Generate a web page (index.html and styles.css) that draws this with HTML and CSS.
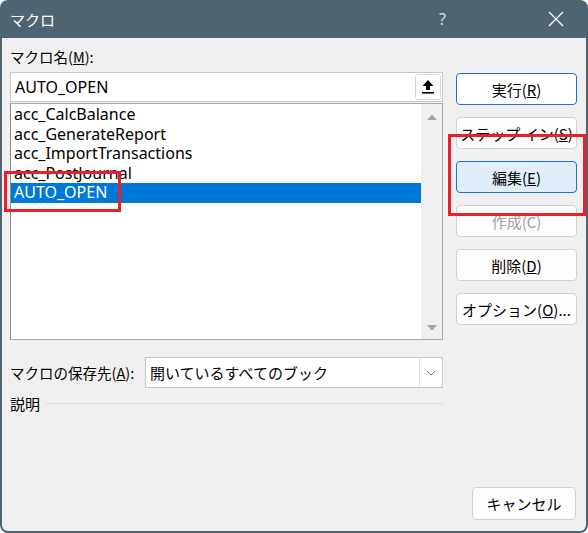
FILE: index.html
```html
<!DOCTYPE html>
<html lang="ja">
<head>
<meta charset="utf-8">
<title>マクロ</title>
<link rel="stylesheet" href="styles.css">
</head>
<body>
<div class="window">
  <div class="titlebar">
    <span class="title">マクロ</span>
    <span class="help">?</span>
    <svg class="close" width="16" height="16" viewBox="0 0 16 16"><path d="M1 1 L15 15 M15 1 L1 15" stroke="#ffffff" stroke-width="1.3" fill="none"/></svg>
  </div>
  <div class="content">
    <div class="main">
      <div class="left">
        <div class="label">マクロ名(<u>M</u>):</div>
        <div class="namebox">
          <span class="nametext">AUTO_OPEN</span>
          <div class="upbtn">
            <svg width="14" height="16" viewBox="0 0 14 16"><path d="M7 1 L12.5 7 L9 7 L9 11 L5 11 L5 7 L1.5 7 Z" fill="#000"/><rect x="1" y="13" width="12" height="1.6" fill="#000"/></svg>
          </div>
        </div>
        <div class="listbox">
          <div class="items">
            <div class="item">acc_CalcBalance</div>
            <div class="item">acc_GenerateReport</div>
            <div class="item">acc_ImportTransactions</div>
            <div class="item">acc_PostJournal</div>
            <div class="item selected">AUTO_OPEN</div>
          </div>
          <div class="scrollbar">
            <svg width="12" height="8" viewBox="0 0 12 8"><path d="M1 7 L6 1.5 L11 7 Z" fill="#a3a3a3"/></svg>
            <svg width="12" height="8" viewBox="0 0 12 8"><path d="M1 1 L6 6.5 L11 1 Z" fill="#a3a3a3"/></svg>
          </div>
        </div>
        <div class="saverow">
          <span class="savelabel">マクロの保存先(<u>A</u>):</span>
          <div class="select">
            <span class="selecttext">開いているすべてのブック</span>
            <div class="selectbtn">
              <svg width="10" height="6" viewBox="0 0 10 6"><path d="M1 1 L5 5 L9 1" stroke="#777" stroke-width="1" fill="none"/></svg>
            </div>
          </div>
        </div>
        <div class="descrow">
          <span>説明</span>
          <div class="rule"></div>
        </div>
      </div>
      <div class="buttons">
        <div class="btn default">実行(<u>R</u>)</div>
        <div class="btn">ステップ イン(<u>S</u>)</div>
        <div class="btn hover">編集(<u>E</u>)</div>
        <div class="btn disabled">作成(C)</div>
        <div class="btn">削除(<u>D</u>)</div>
        <div class="btn">オプション(<u>O</u>)...</div>
      </div>
    </div>
    <div class="footer">
      <div class="btn cancel">キャンセル</div>
    </div>
  </div>
  <div class="mark mark-list"></div>
  <div class="mark mark-edit"></div>
</div>
</body>
</html>
```

FILE: styles.css
```css
html, body {
  margin: 0;
  padding: 0;
  background: #ffffff;
}
body {
  font-family: "Noto Sans", "Noto Sans CJK JP", sans-serif;
  font-size: 15px;
  color: #000;
}
.window {
  position: relative;
  width: 588px;
  height: 533px;
  background: #4e6470;
  border-radius: 8px;
  display: flex;
  flex-direction: column;
  overflow: hidden;
}
.titlebar {
  height: 38px;
  flex: none;
  display: flex;
  align-items: center;
  color: #ffffff;
}
.title {
  margin-left: 10px;
  font-family: "Noto Sans CJK JP", sans-serif;
  font-size: 15px;
  flex: 1;
}
.help {
  font-size: 16px;
  color: #d8dee2;
  margin-right: 102px;
}
.close {
  margin-right: 24px;
}
.content {
  flex: 1;
  margin: 0 2px 2px 2px;
  background: #f0f0f0;
  border-radius: 0 0 6px 6px;
  display: flex;
  flex-direction: column;
  padding: 9px 0 11px 8px;
}
.main {
  display: grid;
  grid-template-columns: 433px 121px;
  column-gap: 13px;
}
.left {
  display: flex;
  flex-direction: column;
}
.label {
  height: 20px;
  line-height: 20px;
  font-family: "Noto Sans CJK JP", sans-serif;
  font-size: 14.5px;
  margin-bottom: 5px;
}
.namebox {
  height: 30px;
  box-sizing: border-box;
  border: 1px solid #c8c8c8;
  background: #fff;
  display: flex;
  align-items: center;
  justify-content: space-between;
  padding: 0 1px 0 4px;
}
.nametext {
  font-size: 16px;
}
.upbtn {
  width: 26px;
  height: 26px;
  box-sizing: border-box;
  border: 1px solid #d8d8d8;
  border-radius: 3px;
  background: #fff;
  display: flex;
  align-items: center;
  justify-content: center;
}
.listbox {
  margin-top: 1px;
  height: 237px;
  box-sizing: border-box;
  border: 1px solid #a9a9a9;
  border-left-color: #8c8c8c;
  background: #fff;
  display: flex;
}
.items {
  flex: 1;
  padding-top: 1px;
}
.item {
  height: 19.5px;
  line-height: 19.5px;
  padding-left: 3px;
  font-size: 16px;
  white-space: nowrap;
}
.item.selected {
  background: #0078d7;
  color: #fff;
}
.scrollbar {
  width: 21px;
  background: #f0f0f0;
  display: flex;
  flex-direction: column;
  justify-content: space-between;
  align-items: center;
  padding: 9px 0 7px;
}
.saverow {
  margin-top: 17px;
  display: flex;
  align-items: center;
}
.savelabel {
  width: 135px;
  font-family: "Noto Sans CJK JP", sans-serif;
  font-size: 14.5px;
}
.select {
  flex: 1;
  height: 31px;
  box-sizing: border-box;
  border: 1px solid #c8c8c8;
  background: #fff;
  display: flex;
  align-items: center;
  justify-content: space-between;
  padding-left: 4px;
}
.selecttext {
  font-family: "Noto Sans CJK JP", sans-serif;
}
.selectbtn {
  width: 22px;
  height: 29px;
  border-left: 1px solid #e0e0e0;
  display: flex;
  align-items: center;
  justify-content: center;
}
.descrow {
  margin-top: 5px;
  height: 20px;
  display: flex;
  align-items: center;
  font-family: "Noto Sans CJK JP", sans-serif;
}
.rule {
  flex: 1;
  height: 1px;
  background: #dcdcdc;
  margin-left: 6px;
}
.buttons {
  padding-top: 26px;
  display: flex;
  flex-direction: column;
  gap: 12px;
}
.btn {
  height: 32px;
  box-sizing: border-box;
  border: 1px solid #d2d2d2;
  border-radius: 4px;
  background: #fdfdfd;
  display: flex;
  align-items: center;
  justify-content: center;
  font-family: "Noto Sans CJK JP", sans-serif;
  font-size: 15px;
  white-space: nowrap;
}
.btn.default {
  border-color: #1a73c8;
  background: #ffffff;
}
.btn.hover {
  border-color: #1a73c8;
  background: #e1eefa;
}
.btn.disabled {
  color: #a0a0a0;
}
.footer {
  margin-top: auto;
  display: flex;
  justify-content: flex-end;
  padding-right: 10px;
}
.cancel {
  width: 104px;
  height: 33px;
}
.mark {
  position: absolute;
  border: 3px solid #e8202a;
  box-sizing: border-box;
}
.mark-list {
  left: 4px;
  top: 171px;
  width: 117px;
  height: 41px;
}
.mark-edit {
  left: 448px;
  top: 134px;
  width: 138px;
  height: 82px;
}
```
